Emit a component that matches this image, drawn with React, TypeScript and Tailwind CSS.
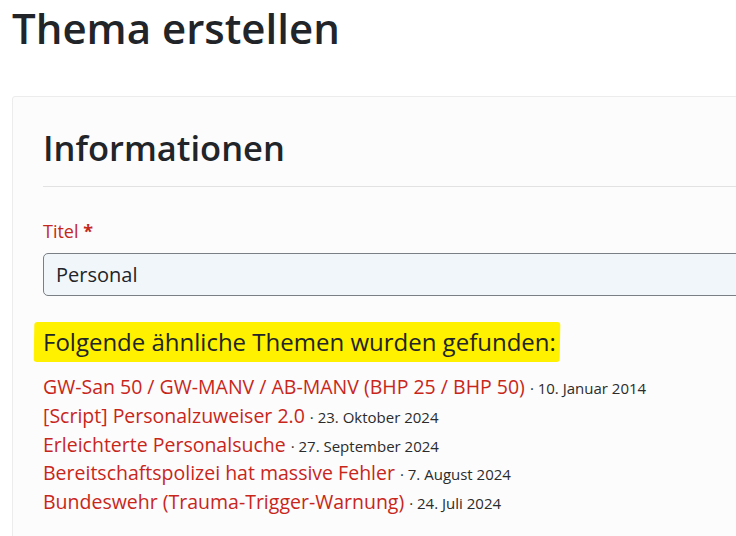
import React from 'react';

const threads = [
  { title: 'GW-San 50 / GW-MANV / AB-MANV (BHP 25 / BHP 50)', date: '10. Januar 2014' },
  { title: '[Script] Personalzuweiser 2.0', date: '23. Oktober 2024' },
  { title: 'Erleichterte Personalsuche', date: '27. September 2024' },
  { title: 'Bereitschaftspolizei hat massive Fehler', date: '7. August 2024' },
  { title: 'Bundeswehr (Trauma-Trigger-Warnung)', date: '24. Juli 2024' },
];

export default function App() {
  return (
    <div className="min-h-screen w-[736px] h-[536px] overflow-hidden bg-white text-[#212529] font-['Open_Sans',sans-serif]">
      <h1 className="pl-[12px] pt-[3px] text-[42px] leading-[50px] font-semibold whitespace-nowrap">
        Thema erstellen
      </h1>

      {/* Card */}
      <div className="mt-[43px] ml-[12px] w-[760px] border border-[#ececec] rounded-[3px] bg-[#fcfcfc] pl-[30px] pr-[30px] pt-[29px] pb-[30px]">
        <h2 className="text-[34.5px] leading-[43px] font-semibold whitespace-nowrap">Informationen</h2>
        <div className="mt-[17px] border-t border-[#e2e2e2]" />

        <label className="block mt-[31px] text-[18px] leading-[27px] text-[#c4281c]">
          Titel <span className="font-bold">*</span>
        </label>
        <div className="mt-[8px] h-[43px] flex items-center border border-[#7a7f85] rounded-[5px] bg-[#f1f6fb] pl-[12px] text-[20px] text-[#212529]">
          Personal
        </div>

        <h3 className="mt-[26px] text-[24px] leading-[40px] whitespace-nowrap">
          <span className="inline-block -ml-[9px] pl-[9px] pr-[4px] bg-[#fff100] rounded-[3px] -skew-x-1">
            <span className="inline-block skew-x-1">Folgende ähnliche Themen wurden gefunden:</span>
          </span>
        </h3>

        <ul className="mt-[11px]">
          {threads.map((t) => (
            <li key={t.title} className="flex items-baseline h-[28.75px] whitespace-nowrap">
              <a href="#" className="text-[19.5px] leading-[28.75px] text-[#c8261b]">
                {t.title}
              </a>
              <span className="ml-[5px] text-[15px] leading-[28.75px] text-[#2b2b2b]">· {t.date}</span>
            </li>
          ))}
        </ul>
      </div>
    </div>
  );
}
